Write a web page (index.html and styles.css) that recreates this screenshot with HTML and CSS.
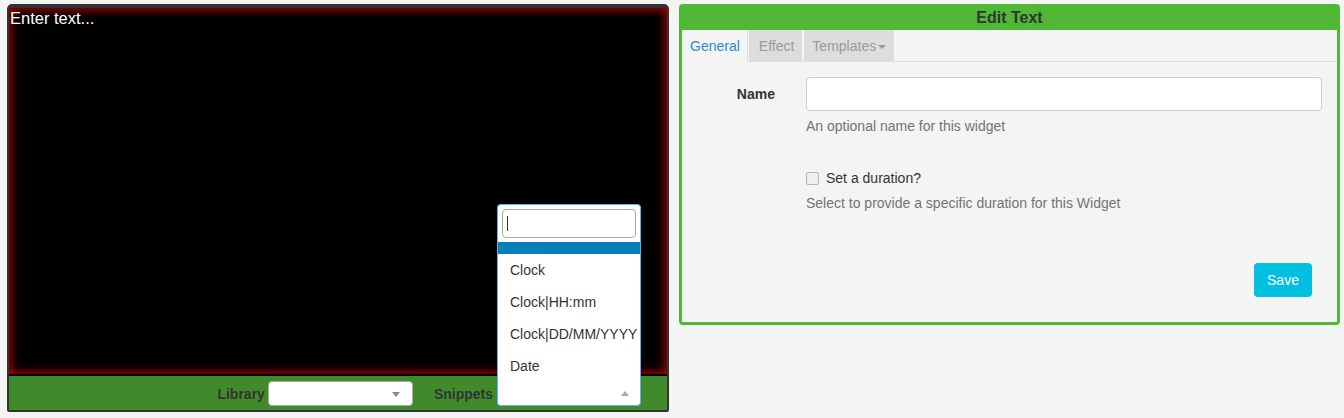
FILE: index.html
```html
<!DOCTYPE html>
<html>
<head>
<meta charset="utf-8">
<link rel="stylesheet" href="styles.css">
</head>
<body>
<div class="page">
  <div class="editor-panel">
    <div class="editor"><span class="placeholder">Enter text...</span></div>
    <div class="toolbar">
      <span class="tb-label">Library</span>
      <div class="select lib-select"><span class="caret-down"></span></div>
      <span class="tb-label snip-label">Snippets</span>
      <div class="select snip-select">
        <span class="caret-up"></span>
        <div class="dropdown">
          <div class="search-wrap"><div class="search"><span class="cursor"></span></div></div>
          <ul class="results">
            <li class="highlighted"></li>
            <li>Clock</li>
            <li>Clock|HH:mm</li>
            <li>Clock|DD/MM/YYYY</li>
            <li>Date</li>
          </ul>
        </div>
      </div>
    </div>
  </div>
  <div class="edit-panel">
    <div class="edit-header">Edit Text</div>
    <ul class="tabs">
      <li class="tab active">General</li>
      <li class="tab">Effect</li>
      <li class="tab">Templates<span class="tab-caret"></span></li>
    </ul>
    <div class="form">
      <div class="row">
        <label class="label">Name</label>
        <div class="field">
          <div class="input"></div>
          <div class="help">An optional name for this widget</div>
        </div>
      </div>
      <div class="row row-check">
        <div class="label"></div>
        <div class="field">
          <div class="check-line"><span class="checkbox"></span><span>Set a duration?</span></div>
          <div class="help">Select to provide a specific duration for this Widget</div>
        </div>
      </div>
      <div class="actions"><button class="btn-save">Save</button></div>
    </div>
  </div>
</div>
</body>
</html>
```
FILE: styles.css
```css
* { box-sizing: border-box; }
html, body { margin: 0; padding: 0; }
body {
  background: #f4f4f4;
  font-family: "Liberation Sans", Arial, sans-serif;
  font-size: 14px;
  color: #333;
  width: 1344px;
  height: 418px;
  overflow: hidden;
}
.page {
  display: flex;
  align-items: flex-start;
  gap: 10px;
  padding: 4px 0 0 7px;
}

/* Left editor panel */
.editor-panel {
  width: 662px;
  height: 408px;
  background: #333;
  border-radius: 5px 5px 2px 2px;
  padding: 4px 2px 2px 2px;
  display: flex;
  flex-direction: column;
}
.editor {
  height: 368px;
  background: #000;
  border-bottom: 2px solid #000;
  box-shadow: inset 0 0 8px 2px #b00000;
  padding: 1px 0 0 1px;
}
.placeholder {
  color: #fff;
  font-size: 16.5px;
  line-height: 19px;
}
.toolbar {
  height: 34px;
  background: #3f8b2b;
  display: flex;
  align-items: center;
  justify-content: flex-end;
  padding: 1px 26px 0 0;
}
.tb-label {
  font-weight: bold;
  color: #333;
  margin-right: 3px;
}
.snip-label { margin-left: 21px; margin-right: 4px; }
.select {
  position: relative;
  height: 25px;
  background: #fff;
  border: 1px solid #aaa;
  border-radius: 4px;
}
.lib-select { width: 145px; }
.snip-select {
  width: 144px;
  border-color: #66afe9;
  border-top-color: #e6e6e6;
  border-radius: 0 0 4px 4px;
}
.caret-down {
  position: absolute;
  right: 12px;
  top: 10px;
  width: 0; height: 0;
  border-left: 4px solid transparent;
  border-right: 4px solid transparent;
  border-top: 5px solid #888;
}
.caret-up {
  position: absolute;
  right: 11px;
  top: 9px;
  width: 0; height: 0;
  border-left: 4px solid transparent;
  border-right: 4px solid transparent;
  border-bottom: 5px solid #aaa;
}
.dropdown {
  position: absolute;
  left: -1px;
  bottom: 100%;
  width: calc(100% + 2px);
  background: #fff;
  border: 1px solid #66afe9;
  border-bottom: none;
  border-radius: 4px 4px 0 0;
}
.search-wrap { padding: 4px 4px 4px 4px; }
.search {
  height: 29px;
  border: 1px solid #aaa;
  border-radius: 4px;
  padding: 6px 0 0 4px;
}
.cursor {
  display: block;
  width: 1px;
  height: 15px;
  background: #333;
}
.results {
  list-style: none;
  margin: 0;
  padding: 0;
}
.results li {
  padding: 6px 0 6px 12px;
  line-height: 20px;
  color: #333;
  white-space: nowrap;
}
.results li.highlighted {
  height: 12px;
  padding: 0;
  background: #0a7eb9;
}

/* Right edit panel */
.edit-panel {
  width: 661px;
  height: 321px;
  border: 3px solid #4fb837;
  border-radius: 4px;
  background: #f4f4f4;
}
.edit-header {
  height: 23px;
  background: #4fb837;
  text-align: center;
  font-weight: bold;
  font-size: 16px;
  line-height: 21px;
  color: #333;
}
.tabs {
  list-style: none;
  margin: 0;
  padding: 0;
  display: flex;
  gap: 2px;
  height: 32px;
  border-bottom: 1px solid #ddd;
}
.tab {
  height: 31px;
  line-height: 32px;
  padding: 0 8px 0 10px;
  background: #ddd;
  color: #999;
}
.tab.active {
  background: #f4f4f4;
  color: #2a8dcf;
  padding: 0 7px 0 8px;
  height: 32px;
  border-right: 1px solid #ddd;
  margin-right: -1px;
}
.tab:last-child { padding: 0 8px 0 8px; }
.tab-caret {
  display: inline-block;
  margin-left: 2px;
  vertical-align: middle;
  width: 0; height: 0;
  border-left: 4px solid transparent;
  border-right: 4px solid transparent;
  border-top: 4px solid #999;
}
.form { padding: 15px 15px 0 0; }
.row {
  display: grid;
  grid-template-columns: 124px 1fr;
}
.label {
  text-align: right;
  padding-right: 31px;
  font-weight: bold;
  line-height: 34px;
}
.input {
  height: 34px;
  background: #fff;
  border: 1px solid #ccc;
  border-radius: 4px;
}
.help {
  margin-top: 5px;
  line-height: 20px;
  color: #737373;
}
.row-check { margin-top: 32px; }
.check-line {
  display: flex;
  align-items: center;
  height: 20px;
  line-height: 20px;
}
.checkbox {
  display: inline-block;
  width: 13px;
  height: 13px;
  border: 1px solid #b4b4b4;
  border-radius: 2px;
  background: #efefef;
  margin-right: 7px;
}
.actions {
  display: flex;
  justify-content: flex-end;
  padding-right: 10px;
  margin-top: 50px;
}
.btn-save {
  width: 58px;
  height: 34px;
  border: none;
  border-radius: 4px;
  background: #00c0e1;
  color: #fff;
  font-family: "Liberation Sans", Arial, sans-serif;
  font-size: 14px;
  padding: 0;
}
```
